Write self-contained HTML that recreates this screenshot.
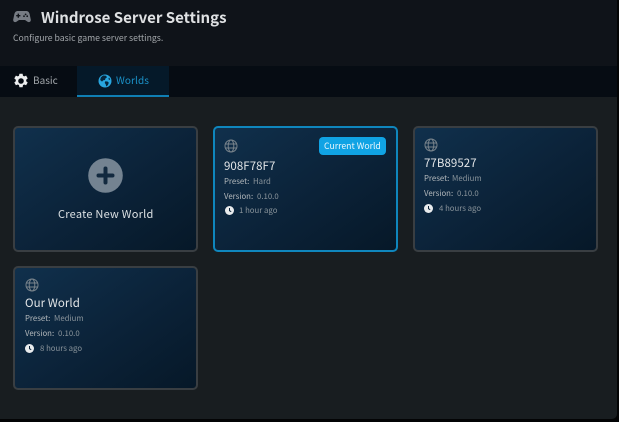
<!DOCTYPE html>
<html><head><meta charset="utf-8">
<style>
*{box-sizing:border-box;margin:0;padding:0}
html,body{width:619px;height:422px;overflow:hidden;background:#030405}
body{position:relative;font-family:"Noto Sans CJK JP","Liberation Sans",sans-serif}
.t{position:absolute;white-space:nowrap;line-height:1}
#panel{position:absolute;left:0;top:0;width:617px;height:419px;background:#181d20;border-bottom-right-radius:5px;overflow:hidden}
#head{position:absolute;left:0;top:0;width:617px;height:66px;background:#0f1319}
#tabs{position:absolute;left:0;top:66px;width:617px;height:31px;background:#060c13}
#tabw{position:absolute;left:77px;top:66px;width:92px;height:31px;background:#051929;border-bottom:2px solid #0f7fb4}
.card{position:absolute;width:185px;border:2px solid #393e42;border-radius:5px;background:linear-gradient(145deg,#10304c 0%,#0b2238 55%,#061828 100%)}
.cur{border-color:#0f86bd}
.lbl{font-size:7.8px;color:#b4b9bc}
.val{font-size:7.8px;color:#8a949b}
.name{font-size:11.5px;color:#e2e5e7;letter-spacing:.05px}
svg{position:absolute;display:block}
</style></head><body>
<div id="panel">
<div id="head"></div>
<div id="tabs"></div>
<div id="tabw"></div>

<svg style="left:13px;top:10px" width="18" height="14" viewBox="0 0 18 14"><path fill="#777c84" fill-rule="evenodd" d="M5 1h8c2 0 3 1 3.600 3l1.200 5.600c.3 2-1.900 3.400-3.400 2L12 10H6l-2.400 1.600C2.100 13 -.1 11.600.2 9.600L1.400 4C2 2 3 1 5 1zM4.600 3.600v1.400H3.200v1.400h1.400v1.400H6V6.400h1.400V5H6V3.600zM12.600 3.500a.9.9 0 100 1.800.9.9 0 000-1.800zM11 5.300a.9.9 0 100 1.800.9.9 0 000-1.800zM14.200 5.300a.9.9 0 100 1.800.9.9 0 000-1.800z"/></svg>
<div class="t" style="left:41px;top:9.500px;font-size:15px;font-weight:700;color:#dfe1e3">Windrose Server Settings</div>
<div class="t" style="left:13px;top:33.500px;font-size:8.700px;color:#a3a7ab">Configure basic game server settings.</div>

<svg style="left:13px;top:73px" width="16" height="16" viewBox="0 0 16 16"><path fill="#eceeef" fill-rule="evenodd" d="M6.400.8h3.200l.4 2 1.200.6 1.900-.8 1.600 2.800-1.500 1.300v1.500l1.500 1.300-1.600 2.800-1.900-.8-1.200.6-.4 2.100H6.400l-.4-2.100-1.200-.6-1.900.8-1.600-2.800 1.500-1.300V6.700L1.300 5.400l1.600-2.800 1.900.8L6 2.800zM8 5.200a2.800 2.800 0 100 5.600 2.800 2.800 0 000-5.600z"/></svg>
<div class="t" style="left:33px;top:75px;font-size:10px;color:#a3a8ac">Basic</div>

<svg style="left:98px;top:74px" width="14" height="14" viewBox="0 0 14 14"><circle cx="7" cy="7" r="6.500" fill="#29a6df"/><path fill="#06263d" d="M5 1.500l3 .3 1 1.400-1.600 1.300-.4 1.500-1.700.3L4 7.600 2.200 6 2.800 3.500zM7.300 7.200l2.500.4 1 1.200-.9 2.300-1.700 1.400-.5-2.300-1-1.300zM11 3.500l1.200 1.700-.8.800-1-1z"/></svg>
<div class="t" style="left:116px;top:75px;font-size:10px;color:#1b93ca;letter-spacing:.1px">Worlds</div>

<div class="card" style="left:13px;top:126px;height:125.500px"></div>
<svg style="left:88px;top:158px" width="35" height="35" viewBox="0 0 35 35"><circle cx="17.500" cy="17.500" r="17.300" fill="#748391"/><path d="M17.500 10.500v14M10.500 17.500h14" stroke="#12293f" stroke-width="4" stroke-linecap="round"/></svg>
<div class="t" style="left:58px;top:208.500px;font-size:11px;color:#dbe0e3;letter-spacing:.25px">Create New World</div>

<div class="card cur" style="left:213px;top:126px;height:125.500px"></div>
<div style="position:absolute;left:319px;top:137px;width:67px;height:18px;background:#10a3e4;border-radius:4px"></div>
<div class="t" style="left:324px;top:141.500px;font-size:8.700px;color:#e9f6fc">Current World</div>
<svg style="left:224px;top:139px" width="14" height="14" viewBox="0 0 14 14" fill="none" stroke="#78838b" stroke-width="1"><circle cx="7" cy="7" r="6"/><ellipse cx="7" cy="7" rx="2.800" ry="6"/><path d="M1.300 5h11.400M1.300 9h11.400"/></svg>
<div class="t name" style="left:224px;top:161px">908F78F7</div>
<div class="t lbl" style="left:224px;top:177.500px">Preset:</div><div class="t val" style="left:253px;top:177.500px">Hard</div>
<div class="t lbl" style="left:224px;top:192.500px">Version:</div><div class="t val" style="left:257px;top:192.500px">0.10.0</div>
<svg style="left:225px;top:206px" width="9" height="9" viewBox="0 0 9 9"><circle cx="4.500" cy="4.500" r="4.500" fill="#e8ebed"/><path d="M4.500 2v2.700l1.700 1" stroke="#0b2238" fill="none"/></svg>
<div class="t val" style="left:239px;top:207px">1 hour ago</div>

<div class="card" style="left:413px;top:126px;height:125.500px"></div>
<svg style="left:424px;top:138px" width="14" height="14" viewBox="0 0 14 14" fill="none" stroke="#78838b" stroke-width="1"><circle cx="7" cy="7" r="6"/><ellipse cx="7" cy="7" rx="2.800" ry="6"/><path d="M1.300 5h11.400M1.300 9h11.400"/></svg>
<div class="t name" style="left:424px;top:158px">77B89527</div>
<div class="t lbl" style="left:424px;top:174.500px">Preset:</div><div class="t val" style="left:452px;top:174.500px">Medium</div>
<div class="t lbl" style="left:424px;top:189.500px">Version:</div><div class="t val" style="left:457px;top:189.500px">0.10.0</div>
<svg style="left:424px;top:204px" width="9" height="9" viewBox="0 0 9 9"><circle cx="4.500" cy="4.500" r="4.500" fill="#e8ebed"/><path d="M4.500 2v2.700l1.700 1" stroke="#0b2238" fill="none"/></svg>
<div class="t val" style="left:439px;top:204.500px">4 hours ago</div>

<div class="card" style="left:13px;top:266px;height:123.500px"></div>
<svg style="left:25px;top:278px" width="14" height="14" viewBox="0 0 14 14" fill="none" stroke="#78838b" stroke-width="1"><circle cx="7" cy="7" r="6"/><ellipse cx="7" cy="7" rx="2.800" ry="6"/><path d="M1.300 5h11.400M1.300 9h11.400"/></svg>
<div class="t name" style="left:25px;top:298px">Our World</div>
<div class="t lbl" style="left:25px;top:314.500px">Preset:</div><div class="t val" style="left:54px;top:314.500px">Medium</div>
<div class="t lbl" style="left:25px;top:329.500px">Version:</div><div class="t val" style="left:58px;top:329.500px">0.10.0</div>
<svg style="left:25px;top:344px" width="9" height="9" viewBox="0 0 9 9"><circle cx="4.500" cy="4.500" r="4.500" fill="#e8ebed"/><path d="M4.500 2v2.700l1.700 1" stroke="#0b2238" fill="none"/></svg>
<div class="t val" style="left:40px;top:344.500px">8 hours ago</div>
</div>
</body></html>
